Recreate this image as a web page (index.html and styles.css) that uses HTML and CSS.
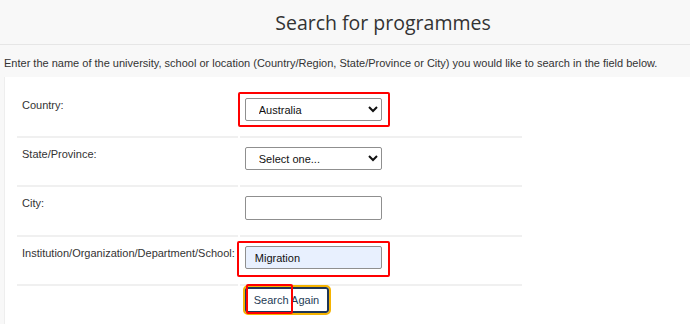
FILE: index.html
```html
<!DOCTYPE html>
<html lang="en">
<head>
    <meta charset="UTF-8">
    <meta name="viewport" content="width=device-width, initial-scale=1.0">
    <title>Search for programmes</title>
    <link rel="stylesheet" href="styles.css">
</head>
<body>
    <div class="page-header">
        <h1>Search for programmes</h1>
    </div>
    <p class="intro">Enter the name of the university, school or location (Country/Region, State/Province or City) you would like to search in the field below.</p>

    <div class="panel">
        <form class="search-form" onsubmit="return false;">
            <table class="search-table">
                <tr>
                    <td class="label">Country:</td>
                    <td class="field">
                        <div class="hl">
                            <select id="country">
                                <option>Australia</option>
                                <option>New Zealand</option>
                            </select>
                            <span class="ring ring-country"></span>
                        </div>
                    </td>
                </tr>
                <tr>
                    <td class="label">State/Province:</td>
                    <td class="field">
                        <div class="hl">
                            <select id="state">
                                <option>Select one...</option>
                            </select>
                        </div>
                    </td>
                </tr>
                <tr>
                    <td class="label">City:</td>
                    <td class="field">
                        <div class="hl">
                            <input type="text" id="city">
                        </div>
                    </td>
                </tr>
                <tr>
                    <td class="label">Institution/Organization/Department/School:</td>
                    <td class="field">
                        <div class="hl">
                            <input type="text" id="institution" class="filled" value="Migration">
                            <span class="ring ring-inst"></span>
                        </div>
                    </td>
                </tr>
                <tr class="actions">
                    <td></td>
                    <td class="field">
                        <div class="hl">
                            <button type="submit" class="btn">Search Again</button>
                            <span class="ring ring-btn"></span>
                        </div>
                    </td>
                </tr>
            </table>
        </form>
    </div>
</body>
</html>
```

FILE: styles.css
```css
body {
    margin: 0;
    background-color: #f8f8f8;
    font-family: "Liberation Sans", Arial, sans-serif;
    font-size: 11px;
    color: #333;
}

.page-header {
    height: 44px;
    border-bottom: 1px solid #e6e6e6;
    padding-left: 76px;
    text-align: center;
}

.page-header h1 {
    margin: 0;
    font-family: "Open Sans", sans-serif;
    font-weight: 400;
    font-size: 19.5px;
    line-height: 45px;
    color: #333;
}

.intro {
    margin: 0;
    padding: 11px 4px 7px;
    line-height: 14px;
}

.panel {
    margin-left: 4px;
    padding: 12px 10px 14px;
    background-color: white;
    border-left: 1px solid #eeeeee;
}

.search-table {
    border-collapse: separate;
    border-spacing: 2px 0;
}

.search-table td {
    vertical-align: top;
    padding: 9px 5px 15px;
    border-bottom: 2px solid #f0f0f0;
}

.search-table td.label {
    width: 210px;
    padding-top: 10px;
    padding-right: 3px;
    padding-bottom: 14px;
    line-height: 13px;
    white-space: nowrap;
}

.search-table td.field {
    width: 272px;
}

.search-table tr.actions td {
    padding-top: 1px;
    padding-bottom: 0;
    border-bottom: none;
}

.hl {
    position: relative;
    display: flex;
    width: max-content;
}

select,
input[type="text"] {
    box-sizing: border-box;
    width: 137px;
    height: 23px;
    margin: 0;
    font-family: "Liberation Sans", Arial, sans-serif;
    font-size: 11px;
    color: #111;
    border: 1px solid #8f8f8f;
    border-radius: 2px;
    background-color: white;
}

select {
    padding-left: 9px;
}

input[type="text"] {
    height: 24px;
    padding: 0 9px;
}

input.filled {
    height: 23px;
    background-color: #e8f0fe;
}

.btn {
    box-sizing: border-box;
    width: 84px;
    height: 26px;
    padding: 0 7px;
    text-align: left;
    font-family: "Liberation Sans", Arial, sans-serif;
    font-size: 11px;
    color: #243b55;
    background-color: white;
    border: 2px solid #1f3656;
    border-radius: 3px;
    outline: 2px solid #f5b301;
    cursor: pointer;
}

/* red annotation boxes drawn over the screenshot */
.ring {
    position: absolute;
    box-sizing: border-box;
    border: 2px solid #ff0000;
    border-radius: 2px;
    pointer-events: none;
}

.ring-country {
    left: -7px;
    top: -6px;
    width: 152px;
    height: 35px;
}

.ring-inst {
    left: -8px;
    top: -5px;
    width: 153px;
    height: 36px;
}

.ring-btn {
    left: 1px;
    top: -3px;
    width: 47px;
    height: 30px;
}
```
